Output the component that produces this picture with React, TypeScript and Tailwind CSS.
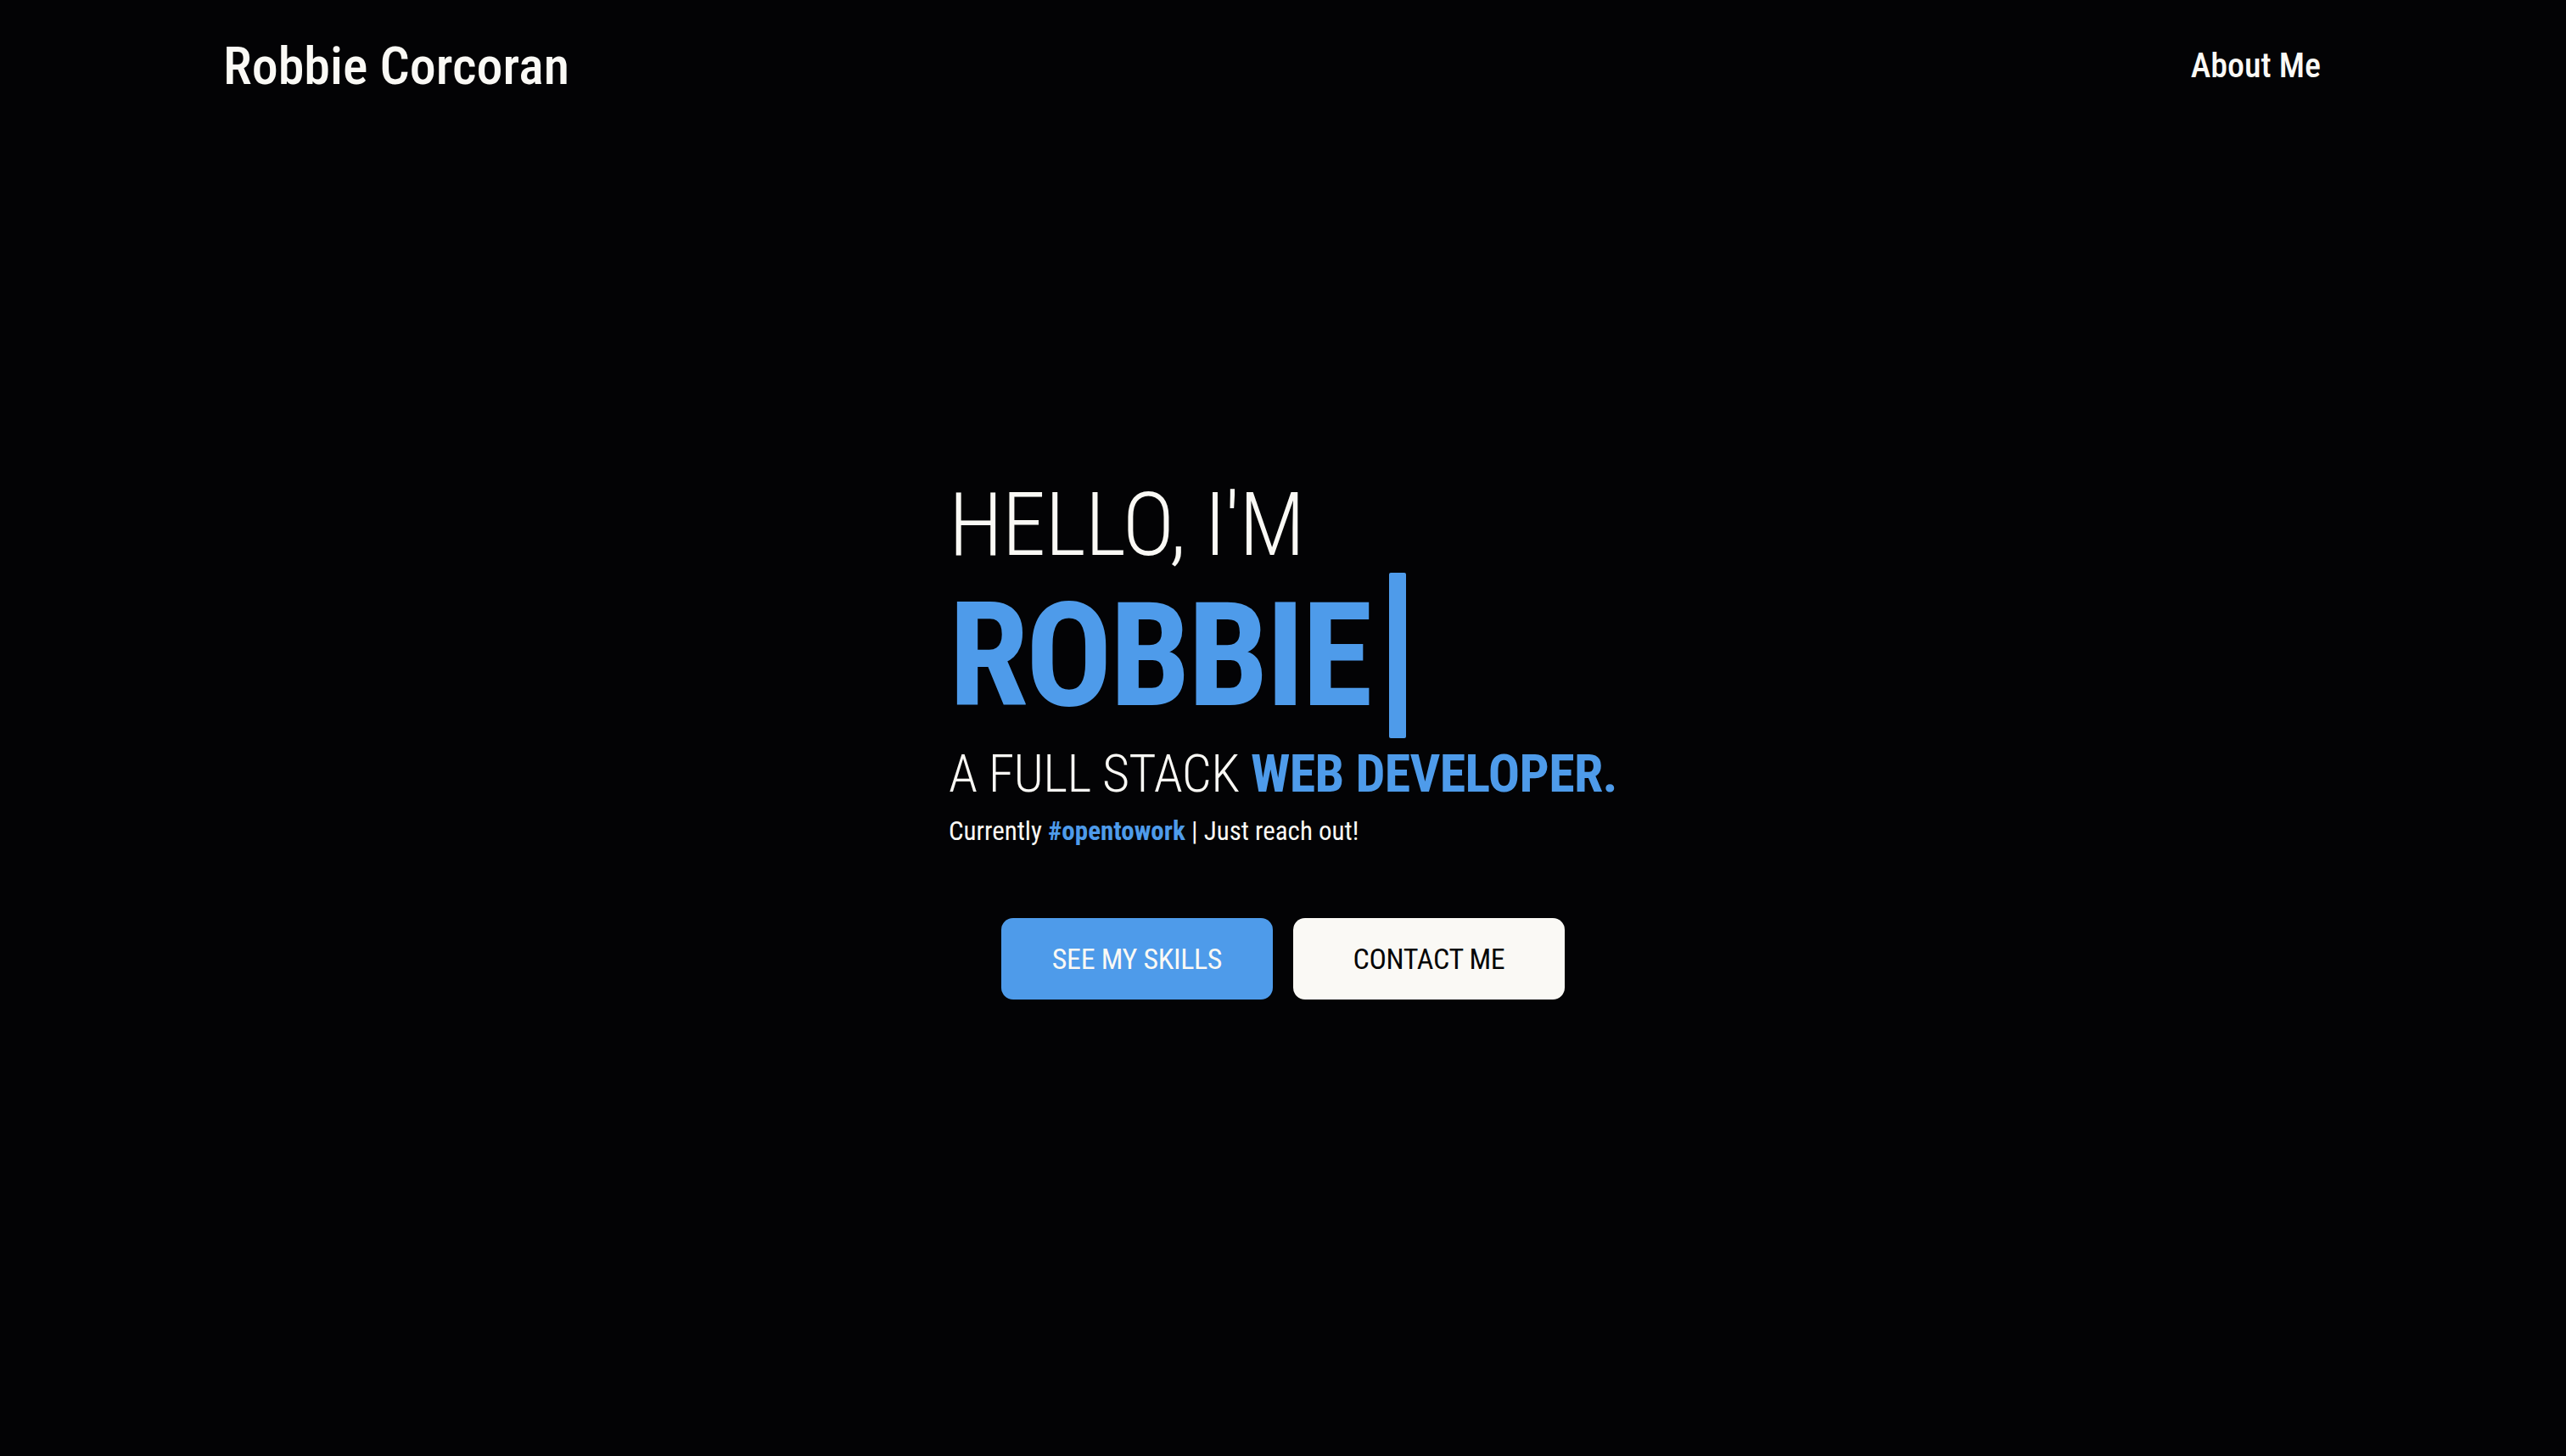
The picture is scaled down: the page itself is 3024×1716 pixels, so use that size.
const Blue = 'text-[#4e9bea]';

function HeroButton({ label, primary = false }: { label: string; primary?: boolean }) {
  return (
    <a
      href={primary ? '#skills' : '#contact'}
      className={
        primary
          ? 'flex h-[96px] w-[320px] items-center justify-center rounded-[14px] bg-[#4e9bea] text-[34px] tracking-[-0.01em] text-[#faf9f5]'
          : 'flex h-[96px] w-[320px] items-center justify-center rounded-[14px] bg-[#faf9f5] text-[34px] tracking-[-0.01em] text-[#050505]'
      }
    >
      {label}
    </a>
  );
}

export default function App() {
  return (
    <div className="flex min-h-screen flex-col bg-[#030305] font-['Roboto',sans-serif] font-stretch-condensed text-[#faf9f5]">
      <header className="flex h-[156px] items-center justify-between pl-[263px] pr-[289px]">
        <a href="/" className="text-[62px] font-medium leading-none">
          Robbie Corcoran
        </a>
        <nav>
          <a href="#about" className="text-[40px] font-medium leading-none">
            About Me
          </a>
        </nav>
      </header>

      <main className="flex flex-1 items-center justify-center pb-[127px]">
        <div className="flex flex-col">
          <h2 className="text-[104px] font-light leading-none tracking-[-0.01em]">HELLO, I'M</h2>
          <div className="mt-[4px] flex items-center gap-[23px]">
            <h1 className={`text-[170px] font-bold leading-none tracking-[-0.02em] ${Blue}`}>ROBBIE</h1>
            <span className="h-[195px] w-[20px] rounded-[2px] bg-[#4e9bea]" />
          </div>
          <p className="mt-[11px] text-[62px] font-light leading-none tracking-[-0.01em]">
            A FULL STACK <span className={`font-bold ${Blue}`}>WEB DEVELOPER.</span>
          </p>
          <p className="mt-[21px] text-[31px] leading-none">
            Currently <span className={`font-bold ${Blue}`}>#opentowork</span> | Just reach out!
          </p>
          <div className="mt-[87px] flex justify-center gap-[24px]">
            <HeroButton primary label="SEE MY SKILLS" />
            <HeroButton label="CONTACT ME" />
          </div>
        </div>
      </main>
    </div>
  );
}
